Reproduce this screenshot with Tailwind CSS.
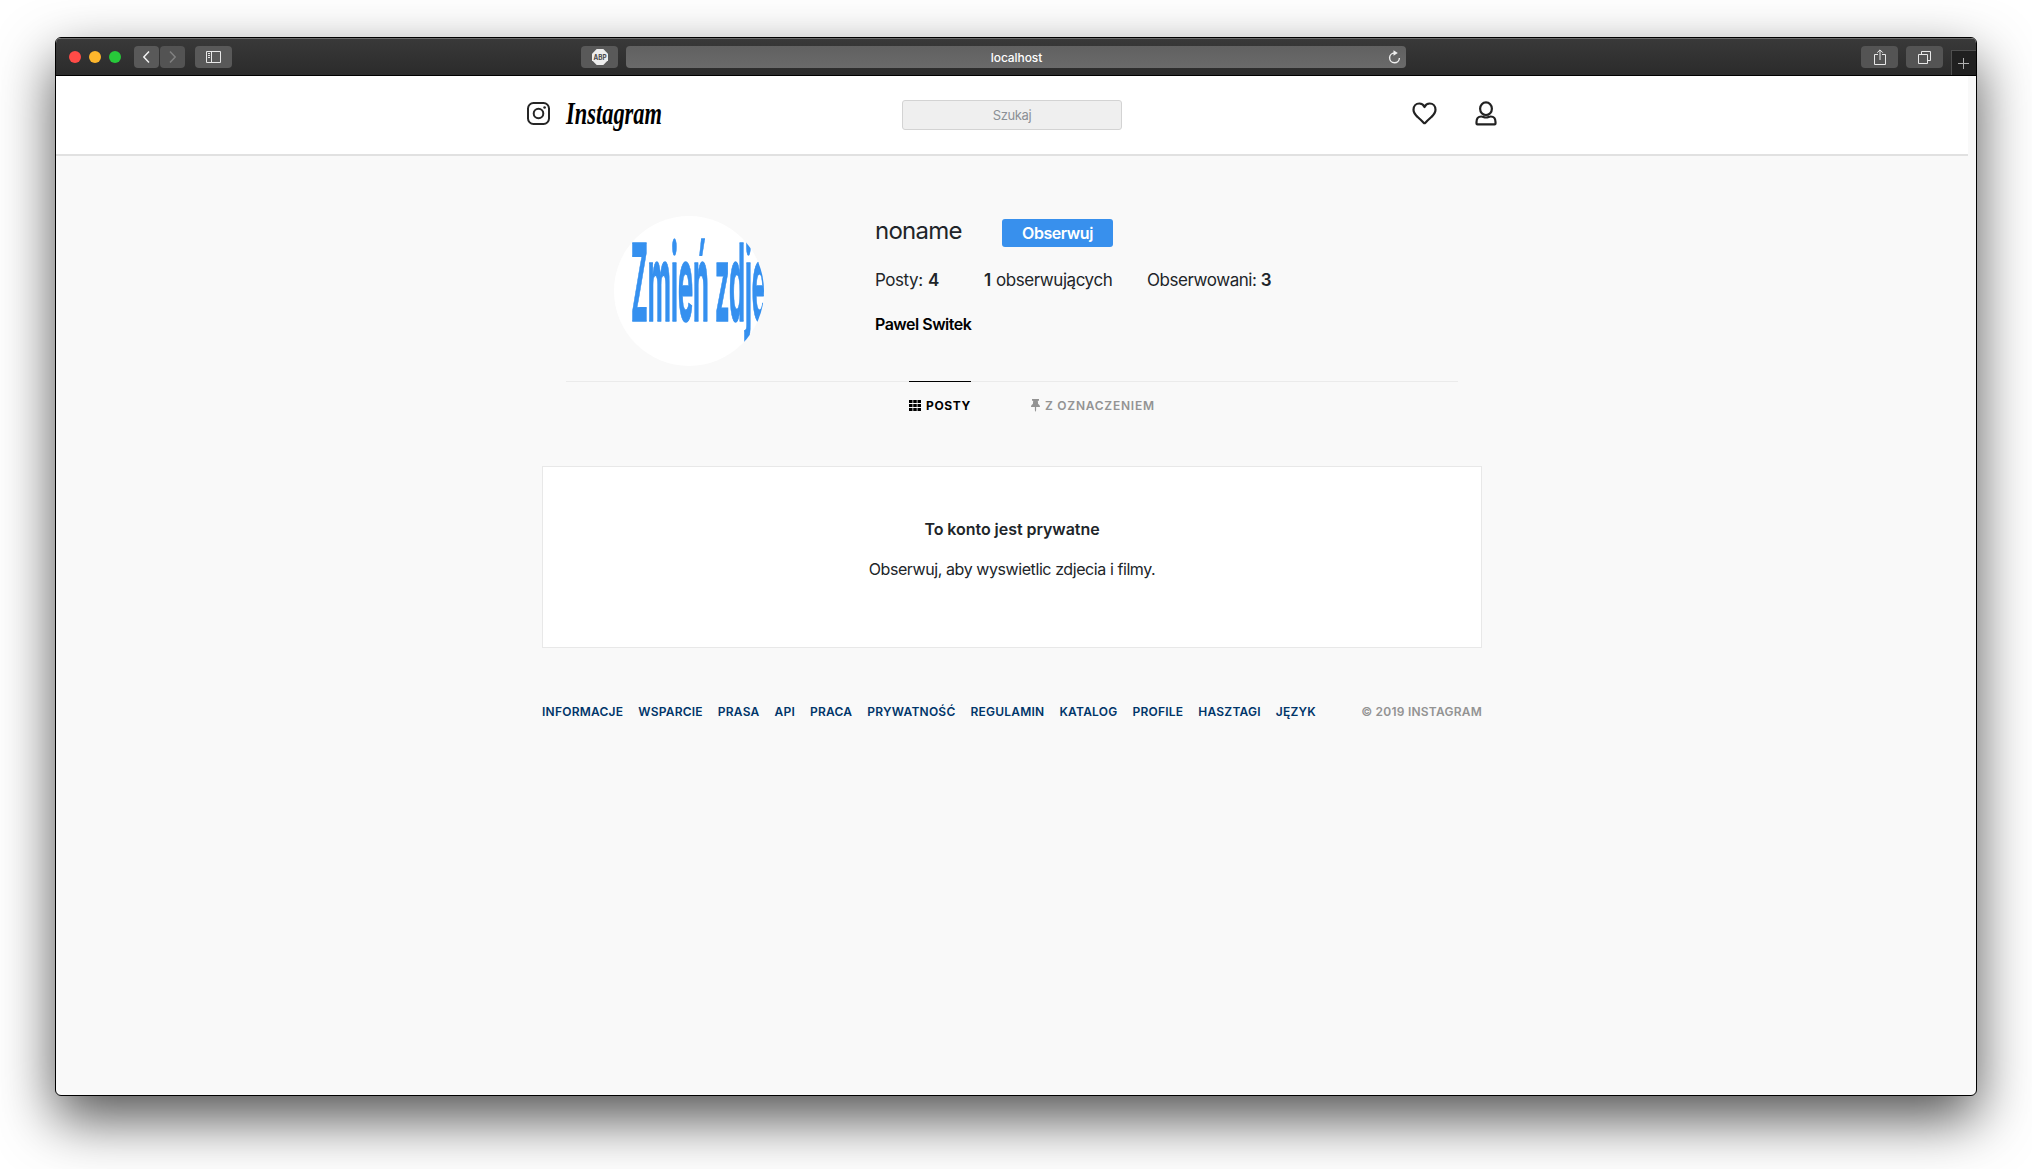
<!DOCTYPE html>
<html lang="pl">
<head>
<meta charset="utf-8">
<title>Instagram</title>
<script src="https://cdn.jsdelivr.net/npm/@tailwindcss/browser@4"></script>
</head>
<body class="h-[1169px] overflow-hidden bg-white pl-[55px] pt-[37px] font-['Inter',sans-serif] text-[#212529]">
<div class="flex h-[1059px] w-[1922px] flex-col overflow-hidden rounded-[6px] border border-black bg-[#f9f9f9] shadow-[0_23px_56px_rgba(0,0,0,0.68)]">
  <!-- Browser toolbar -->
  <div class="flex h-[38px] shrink-0 items-start border-b border-t border-b-black border-t-[#6b6b6b] bg-linear-to-b from-[#393939] to-[#2b2b2b] pl-[13px]">
    <div class="flex gap-2 pt-[12px]">
      <i class="size-3 rounded-full bg-[#ff4b47]"></i><i class="size-3 rounded-full bg-[#fdb62c]"></i><i class="size-3 rounded-full bg-[#27c93a]"></i>
    </div>
    <div class="ml-[13px] mt-[7px] flex gap-px">
      <div class="flex h-[22px] w-[25px] items-center justify-center rounded-[4px] bg-[#595959]"><svg width="9" height="14" viewBox="0 0 9 14" fill="none" stroke="#f0f0f0" stroke-width="1.5"><path d="M7 1.5 1.8 7 7 12.5"/></svg></div>
      <div class="flex h-[22px] w-[25px] items-center justify-center rounded-[4px] bg-[#535353]"><svg width="9" height="14" viewBox="0 0 9 14" fill="none" stroke="#808080" stroke-width="1.5"><path d="M2 1.5 7.200 7 2 12.500"/></svg></div>
    </div>
    <div class="ml-[10px] mt-[7px] flex h-[22px] w-[37px] items-center justify-center rounded-[4px] bg-[#595959]"><svg width="15" height="12" viewBox="0 0 15 12" fill="none" stroke="#e8e8e8"><path d="M.5.5h14v11H.5zM5.500.5v11M2 2.500h2M2 4.500h2M2 6.500h2"/></svg></div>
    <div class="ml-[349px] mt-[7px] flex h-[22px] w-[37px] items-center justify-center rounded-[4px] bg-[#595959]"><svg width="16" height="16" viewBox="0 0 16 16"><path d="M4.700 0h6.600L16 4.700v6.600L11.300 16H4.700L0 11.300V4.700z" fill="#ededed"/><text x="8" y="10.600" text-anchor="middle" font-size="7" font-weight="700" textLength="13" lengthAdjust="spacingAndGlyphs" fill="#484848">ABP</text></svg></div>
    <div class="ml-2 mt-[7px] flex h-[22px] w-[780px] items-center rounded-[4px] bg-linear-to-b from-[#616161] to-[#6a6a6a] pr-[5px]">
      <span class="flex-1 pl-[19px] pt-px text-center text-[12px] font-medium leading-none tracking-[-0.1px] text-white">localhost</span>
      <svg width="13" height="14" viewBox="0 0 13 14" fill="none" stroke="#efefef" stroke-width="1.400"><path d="M6.500 3A4.900 4.900 0 1 0 11.400 8"/><path d="M5.500.2 9.800 3 5.500 5.800z" fill="#efefef" stroke="none"/></svg>
    </div>
    <div class="ml-[455px] mt-[7px] flex h-[22px] w-[37px] items-center justify-center rounded-[4px] bg-[#545454]"><svg class="-mt-px" width="12" height="16" viewBox="0 0 12 16" fill="none" stroke="#e8e8e8"><path d="M4 5.500H.5v10h11v-10H8M6 11V1M3.200 3.700 6 .9l2.800 2.800"/></svg></div>
    <div class="ml-2 mt-[7px] flex h-[22px] w-[37px] items-center justify-center rounded-[4px] bg-[#545454]"><svg width="13" height="13" viewBox="0 0 13 13" fill="none" stroke="#e8e8e8"><path d="M.5 3.500h9v9h-9zM3.500 3V.5h9v9H10"/></svg></div>
    <div class="ml-2 mt-[11px] flex h-[25px] w-[25px] items-center justify-center border-l border-t border-[#4e4e4e] bg-[#202020] pr-px"><svg width="11" height="11" viewBox="0 0 11 11" stroke="#b0b0b0"><path d="M5.500 0v11M0 5.500h11"/></svg></div>
  </div>

  <!-- Navigation -->
  <header class="flex h-[80px] w-[1912px] shrink-0 items-start border-b-2 border-[#e1e1e1] bg-white pl-[471px]">
    <svg class="mt-[26px]" width="23" height="23" viewBox="0 0 23 23" fill="none" stroke="#262626" stroke-width="2"><rect x="1" y="1" width="21" height="21" rx="5.500"/><circle cx="11.500" cy="11.500" r="4.800"/><circle cx="17.600" cy="5.500" r="1.300" fill="#262626" stroke="none"/></svg>
    <svg class="ml-[15px] mt-[16px]" width="98" height="48" viewBox="0 0 98 48"><text x="1" y="32" font-family="Liberation Serif, serif" font-style="italic" font-weight="700" font-size="32" textLength="96" lengthAdjust="spacingAndGlyphs" fill="#000">Instagram</text></svg>
    <div class="ml-[239px] mt-[24px] flex h-[30px] w-[220px] items-center justify-center rounded-[3px] border border-[#d3d3d3] bg-[#efefef] pt-px text-[13px] tracking-[-0.35px] text-[#8b9095]">Szukaj</div>
    <svg class="ml-[290px] mt-[26px]" width="25" height="23" viewBox="0 0 25 23" fill="none" stroke="#222" stroke-width="2.200" stroke-linejoin="round"><path d="M12.500 5C11.500 2.700 9.700 1.500 7.300 1.500 4 1.500 1.500 4.200 1.500 7.800c0 3 1.600 4.900 4.200 7.300 2.200 2 4.300 3.900 5.900 5.600q.9.900 1.800 0c1.600-1.700 3.700-3.600 5.900-5.600 2.600-2.400 4.200-4.300 4.200-7.300 0-3.600-2.500-6.300-5.800-6.300-2.400 0-4.200 1.200-5.200 3.500z"/></svg>
    <svg class="ml-[38px] mt-[25px]" width="22" height="25" viewBox="0 0 22 25" fill="none" stroke="#222" stroke-width="2.200" stroke-linejoin="round"><ellipse cx="11" cy="7.700" rx="5.900" ry="6.300"/><path d="M6.300 15.500C3 15.500 1.500 18 1.500 21v1.500q0 .9.900.9h17.200q.9 0 .9-.9V21c0-3-1.500-5.500-4.800-5.500-1.700 0-2.500 1-4.700 1s-3-1-4.700-1z"/></svg>
  </header>

  <main class="flex flex-col">
    <!-- Profile summary -->
    <section class="flex h-[225px] pl-[558px] pt-[60px]">
      <div class="size-[150px] shrink-0 overflow-hidden rounded-full bg-white">
        <svg width="150" height="150" viewBox="0 0 150 150"><text x="17" y="104.500" font-size="107" font-weight="700" textLength="136" lengthAdjust="spacingAndGlyphs" fill="#3590ef" stroke="#3590ef" stroke-width="1.500">Zmień zdje</text></svg>
      </div>
      <div class="ml-[111px] flex flex-col">
        <div class="flex items-start">
          <h1 class="w-[127px] text-[24px] leading-[30px] tracking-[-0.75px]">noname</h1>
          <button class="mt-[3px] h-[28px] w-[111px] rounded-[3px] bg-[#3890ed] text-[16px] font-semibold leading-[28px] tracking-[-0.45px] text-white">Obserwuj</button>
        </div>
        <div class="mt-[21px] flex text-[17px] leading-6 tracking-[-0.45px]">
          <p class="w-[109px]">Posty: <b class="ml-px font-semibold">4</b></p>
          <p class="w-[163px]"><b class="mr-px font-semibold">1</b> obserwujących</p>
          <p>Obserwowani: <b class="font-semibold">3</b></p>
        </div>
        <p class="mt-5 text-[16px] font-semibold leading-6 tracking-[-0.5px] text-black">Pawel Switek</p>
      </div>
    </section>

    <!-- Tabs -->
    <nav class="ml-[510px] flex h-[85px] w-[892px] border-t border-[#ebebeb] pl-[343px] text-[12px] font-bold leading-4 tracking-[0.6px]">
      <div class="-mt-px flex h-[32px] w-[62px] items-start border-t border-black pt-4 text-black">
        <svg class="mr-[5px] mt-[2px] shrink-0" width="12" height="11" viewBox="0 0 12 11"><path d="M0 0h3.500v3H0zM4.250 0h3.500v3h-3.500zM8.500 0H12v3H8.500zM0 4h3.500v3H0zM4.250 4h3.500v3h-3.500zM8.500 4H12v3H8.500zM0 8h3.500v3H0zM4.250 8h3.500v3h-3.500zM8.500 8H12v3H8.500z"/></svg>POSTY
      </div>
      <div class="ml-[60px] flex items-start pt-4 font-semibold tracking-[0.75px] text-[#939393]">
        <svg class="mr-[5px] mt-[1px]" width="9" height="13" viewBox="0 0 9 13" fill="#939393"><path d="M1 0h7v1.700H6.800l.3 3.300C8.300 5.700 9 6.600 9 8H5.100v3.300L4.500 13l-.6-1.700V8H0c0-1.400.7-2.300 1.900-3l.3-3.300H1z"/></svg>Z OZNACZENIEM
      </div>
    </nav>

    <!-- Private account notice -->
    <section class="ml-[486px] flex h-[182px] w-[940px] flex-col items-center border border-[#e8e8e8] bg-white pt-[50px] text-[16px] leading-6">
      <h2 class="font-semibold tracking-[-0.05px]">To konto jest prywatne</h2>
      <p class="mt-4 tracking-[-0.42px]">Obserwuj, aby wyswietlic zdjecia i filmy.</p>
    </section>

    <!-- Footer -->
    <footer class="ml-[486px] mt-[54px] flex w-[940px] gap-[15px] text-[12px] font-semibold leading-5 tracking-[0.23px] text-[#003569]">
      <a>INFORMACJE</a><a>WSPARCIE</a><a>PRASA</a><a>API</a><a>PRACA</a><a>PRYWATNOŚĆ</a><a>REGULAMIN</a><a>KATALOG</a><a>PROFILE</a><a>HASZTAGI</a><a>JĘZYK</a>
      <span class="ml-auto text-[#939393]">© 2019 INSTAGRAM</span>
    </footer>
  </main>
</div>
</body>
</html>
